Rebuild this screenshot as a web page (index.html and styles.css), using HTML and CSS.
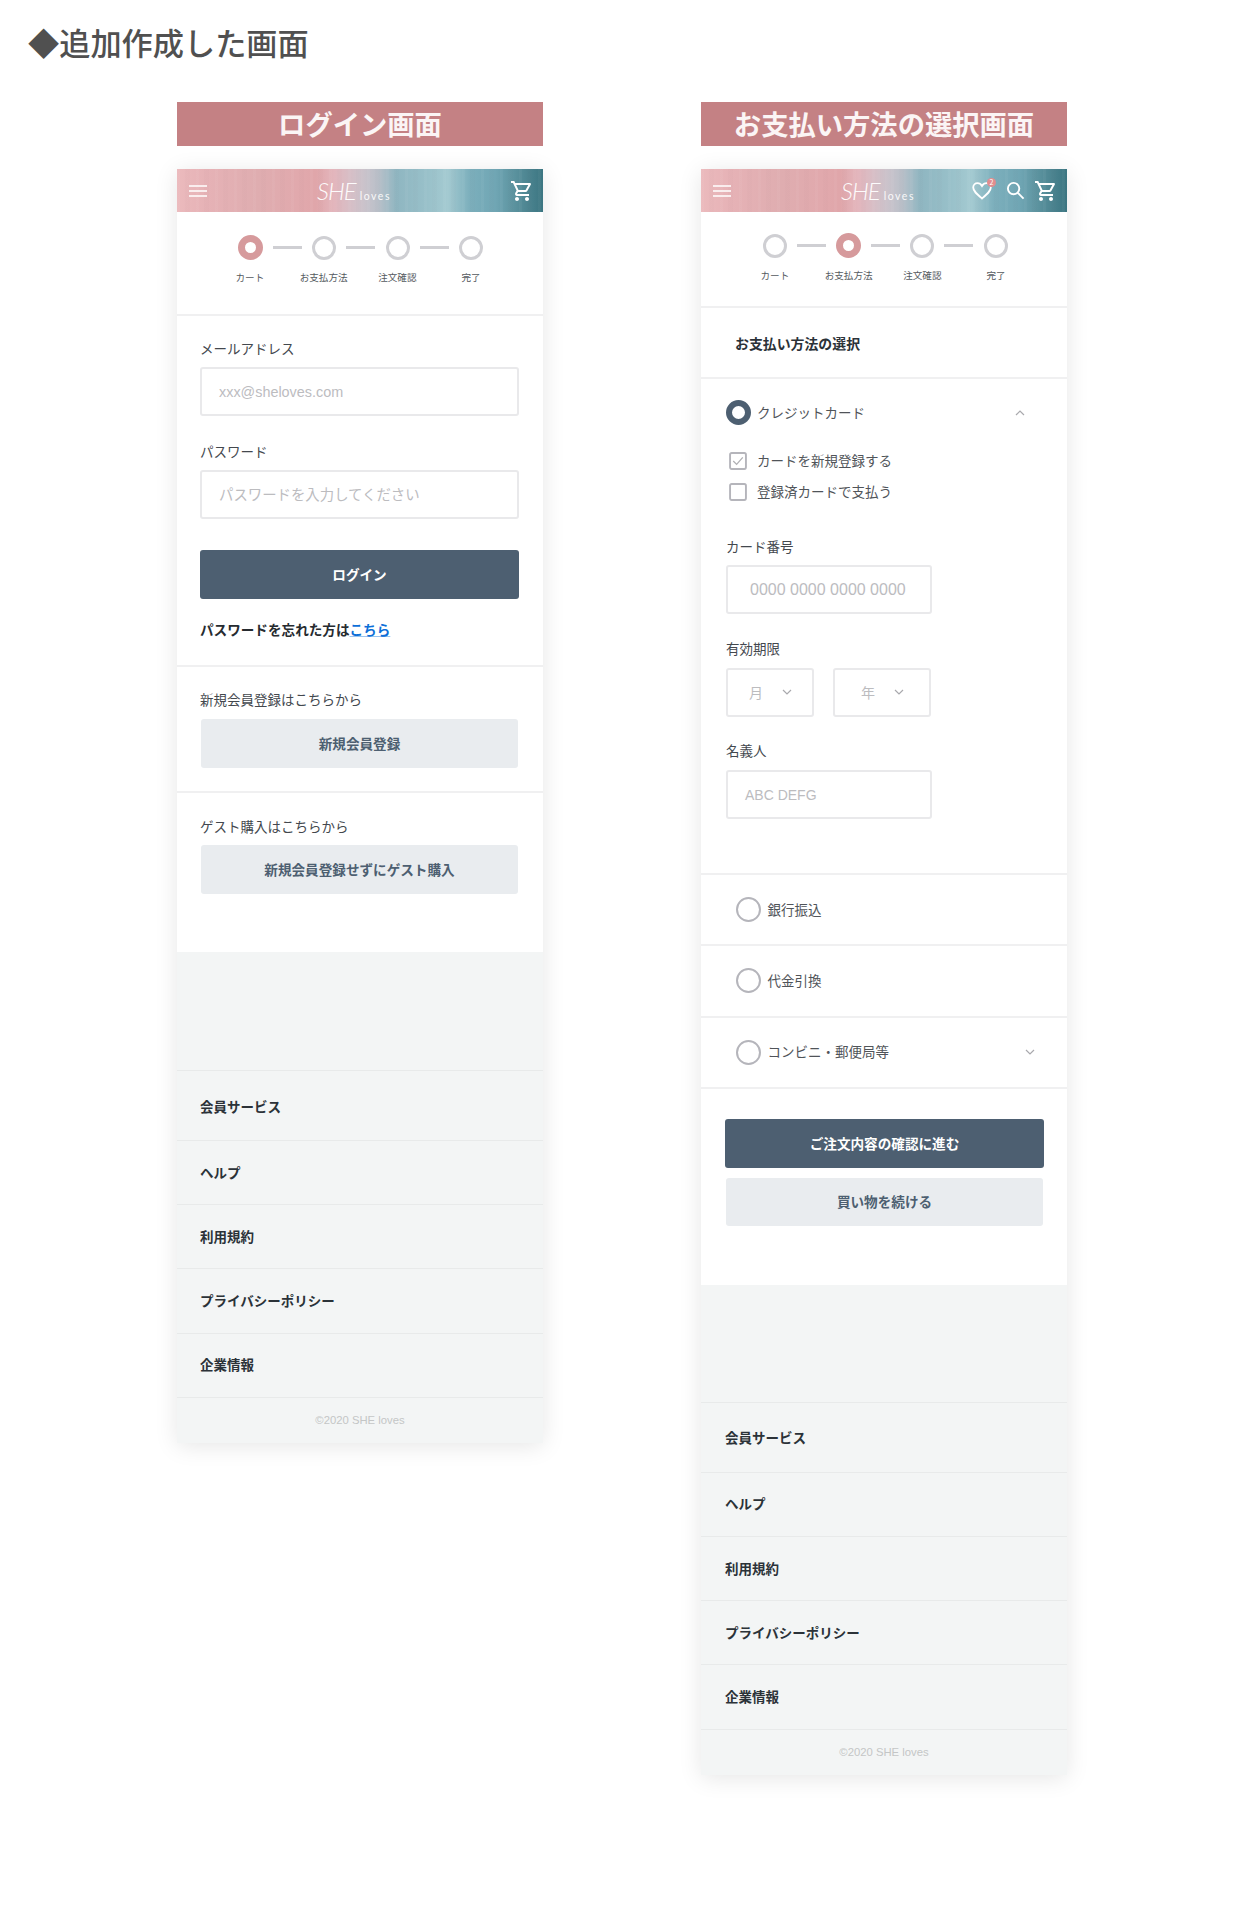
FILE: index.html
```html
<!DOCTYPE html>
<html lang="ja">
<head>
<meta charset="utf-8">
<title>追加作成した画面</title>
<link rel="stylesheet" href="styles.css">
</head>
<body>
<h1 class="page-title">◆追加作成した画面</h1>
<main class="screens">
  <section class="screen">
    <h2 class="screen-title">ログイン画面</h2>
    <div class="phone">
      <header class="app-bar">
        <svg class="icon-menu" viewBox="0 0 18 12"><path d="M0 1h18M0 6h18M0 11h18"/></svg>
        <div class="logo"><span class="logo-she">SHE</span><span class="logo-loves">loves</span></div>
        <div class="app-actions">
          <svg class="icon-cart" viewBox="0 0 24 24"><path d="M15.55 13c.75 0 1.41-.41 1.75-1.03l3.58-6.49c.37-.66-.11-1.48-.87-1.48H5.21l-.94-2H1v2h2l3.6 7.59-1.35 2.44C4.52 15.37 5.48 17 7 17h12v-2H7l1.1-2h7.45zM6.16 6h12.15l-2.76 5H8.53L6.16 6zM7 18c-1.1 0-1.99.9-1.99 2S5.9 22 7 22s2-.9 2-2-.9-2-2-2zm10 0c-1.1 0-1.99.9-1.99 2s.89 2 1.99 2 2-.9 2-2-.9-2-2-2z"/></svg>
        </div>
      </header>
      <div class="steps steps-login">
        <div class="step-track">
          <span class="dot dot-on"></span><span class="link"></span>
          <span class="dot"></span><span class="link"></span>
          <span class="dot"></span><span class="link"></span>
          <span class="dot"></span>
        </div>
        <div class="step-labels"><span>カート</span><span>お支払方法</span><span>注文確認</span><span>完了</span></div>
      </div>
      <div class="block block-login">
        <div class="label label-first">メールアドレス</div>
        <div class="field">xxx@sheloves.com</div>
        <div class="label label-next">パスワード</div>
        <div class="field">パスワードを入力してください</div>
        <div class="btn btn-dark btn-login">ログイン</div>
        <p class="forgot">パスワードを忘れた方は<a class="forgot-link" href="#">こちら</a></p>
      </div>
      <div class="block block-register">
        <div class="label label-register">新規会員登録はこちらから</div>
        <div class="btn btn-light">新規会員登録</div>
      </div>
      <div class="block block-guest">
        <div class="label label-first">ゲスト購入はこちらから</div>
        <div class="btn btn-light">新規会員登録せずにゲスト購入</div>
      </div>
      <footer class="site-foot">
        <a class="foot-row foot-row-first">会員サービス</a>
        <a class="foot-row">ヘルプ</a>
        <a class="foot-row">利用規約</a>
        <a class="foot-row">プライバシーポリシー</a>
        <a class="foot-row">企業情報</a>
        <div class="copyright">©2020 SHE loves</div>
      </footer>
    </div>
  </section>

  <section class="screen">
    <h2 class="screen-title">お支払い方法の選択画面</h2>
    <div class="phone">
      <header class="app-bar">
        <svg class="icon-menu" viewBox="0 0 18 12"><path d="M0 1h18M0 6h18M0 11h18"/></svg>
        <div class="logo"><span class="logo-she">SHE</span><span class="logo-loves">loves</span></div>
        <div class="app-actions">
          <span class="heart-wrap">
            <svg class="icon-heart" viewBox="0 0 20 18"><path d="M10 16.500C4.500 11.800 1.200 9 1.200 5.600 1.200 3 3.200 1.200 5.500 1.200c1.800 0 3.400 1 4.500 2.800 1.100-1.800 2.700-2.800 4.500-2.800 2.300 0 4.300 1.800 4.300 4.400 0 3.400-3.300 6.200-8.800 10.900z"/></svg>
            <span class="badge">2</span>
          </span>
          <svg class="icon-search" viewBox="0 0 20 20"><circle cx="8" cy="8" r="6"/><path d="M12.500 12.500L18.500 18.500"/></svg>
          <svg class="icon-cart" viewBox="0 0 24 24"><path d="M15.55 13c.75 0 1.41-.41 1.75-1.03l3.58-6.49c.37-.66-.11-1.48-.87-1.48H5.21l-.94-2H1v2h2l3.6 7.59-1.35 2.44C4.52 15.37 5.48 17 7 17h12v-2H7l1.1-2h7.45zM6.16 6h12.15l-2.76 5H8.53L6.16 6zM7 18c-1.1 0-1.99.9-1.99 2S5.9 22 7 22s2-.9 2-2-.9-2-2-2zm10 0c-1.1 0-1.99.9-1.99 2s.89 2 1.99 2 2-.9 2-2-.9-2-2-2z"/></svg>
        </div>
      </header>
      <div class="steps steps-pay">
        <div class="step-track">
          <span class="dot"></span><span class="link"></span>
          <span class="dot dot-on"></span><span class="link"></span>
          <span class="dot"></span><span class="link"></span>
          <span class="dot"></span>
        </div>
        <div class="step-labels"><span>カート</span><span>お支払方法</span><span>注文確認</span><span>完了</span></div>
      </div>
      <div class="pay-heading">お支払い方法の選択</div>
      <div class="block-card">
        <div class="option-head">
          <span class="radio radio-on"></span>
          <span class="option-name option-name-on">クレジットカード</span>
          <svg class="chev chev-up" viewBox="0 0 10 6"><path d="M1 5l4-4 4 4"/></svg>
        </div>
        <div class="check-row check-row-first">
          <svg class="checkbox" viewBox="0 0 17 17"><rect x="1" y="1" width="15" height="15" rx="1.500"/><path class="tick" d="M4 8.500l3.200 3.200L13 5"/></svg>
          <span>カードを新規登録する</span>
        </div>
        <div class="check-row">
          <svg class="checkbox" viewBox="0 0 17 17"><rect x="1" y="1" width="15" height="15" rx="1.500"/></svg>
          <span>登録済カードで支払う</span>
        </div>
        <div class="label label-card">カード番号</div>
        <div class="field field-card">0000 0000 0000 0000</div>
        <div class="label label-expiry">有効期限</div>
        <div class="selects">
          <div class="select select-month"><span>月</span><svg class="chev" viewBox="0 0 10 6"><path d="M1 1l4 4 4-4"/></svg></div>
          <div class="select select-year"><span>年</span><svg class="chev" viewBox="0 0 10 6"><path d="M1 1l4 4 4-4"/></svg></div>
        </div>
        <div class="label label-holder">名義人</div>
        <div class="field field-holder">ABC DEFG</div>
      </div>
      <div class="option-row"><span class="radio"></span><span class="option-name">銀行振込</span></div>
      <div class="option-row"><span class="radio"></span><span class="option-name">代金引換</span></div>
      <div class="option-row"><span class="radio"></span><span class="option-name">コンビニ・郵便局等</span><svg class="chev chev-end" viewBox="0 0 10 6"><path d="M1 1l4 4 4-4"/></svg></div>
      <div class="actions">
        <div class="btn btn-dark">ご注文内容の確認に進む</div>
        <div class="btn btn-light btn-continue">買い物を続ける</div>
      </div>
      <footer class="site-foot site-foot-pay">
        <a class="foot-row foot-row-first">会員サービス</a>
        <a class="foot-row">ヘルプ</a>
        <a class="foot-row">利用規約</a>
        <a class="foot-row">プライバシーポリシー</a>
        <a class="foot-row">企業情報</a>
        <div class="copyright">©2020 SHE loves</div>
      </footer>
    </div>
  </section>
</main>
</body>
</html>
```

FILE: styles.css
```css
* { box-sizing: border-box; }
html, body { margin: 0; padding: 0; }
body {
  height: 1911px;
  background: #fff;
  font-family: "Noto Sans CJK JP", "Liberation Sans", sans-serif;
  color: #43484e;
  overflow: hidden;
}
.page-title {
  margin: 0;
  padding: 21px 0 0 28px;
  height: 102px;
  font-size: 31.200px;
  line-height: 42px;
  font-weight: 500;
  color: #505050;
}
.screens {
  display: flex;
  gap: 158px;
  padding-left: 177px;
}
.screen { width: 366px; }
.screen-title {
  margin: 0 0 23px;
  height: 44px;
  background: #c48184;
  color: #fbf5f5;
  text-align: center;
  font-size: 27.300px;
  line-height: 42px;
  font-weight: 700;
}
.phone {
  background: #fff;
  box-shadow: 0 3px 22px rgba(0, 0, 0, .1);
}
.app-bar {
  height: 43px;
  display: grid;
  grid-template-columns: 1fr auto 1fr;
  align-items: center;
  padding: 0 9px 0 12px;
  background:
    repeating-linear-gradient(90deg, rgba(255,255,255,.035) 0 3px, rgba(255,255,255,0) 3px 8px, rgba(120,90,100,.02) 8px 13px, rgba(255,255,255,0) 13px 19px),
    linear-gradient(90deg, #ebbabd 0%, #e6b2b6 8%, #dfadb0 22%, #e1a9ad 33%, #e0a6aa 38%, #e3b6bd 43%, #cfc3cb 50%, #b9c0c9 55%, #8fb6c1 60%, #98c0c9 68%, #a4cad1 74%, #7cafbc 80%, #70a6b4 87%, #5c939f 92%, #3b7581 100%);
}
.icon-menu { width: 18px; height: 12px; fill: none; stroke: #fff; stroke-width: 1.700; }
.logo {
  display: flex;
  align-items: baseline;
  gap: 4px;
  margin-right: 15px;
  color: #fff;
}
.logo-she {
  font-family: "Lato", sans-serif;
  font-style: italic;
  font-weight: 300;
  font-size: 24px;
  line-height: 28px;
  letter-spacing: -1px;
  opacity: .95;
}
.logo-loves {
  font-family: "Lato", sans-serif;
  font-size: 10.500px;
  letter-spacing: 1.500px;
  opacity: .9;
}
.app-actions {
  display: flex;
  align-items: center;
  justify-content: flex-end;
  gap: 9px;
}
.icon-cart { width: 24px; height: 24px; fill: #fff; }
.icon-search { width: 19px; height: 19px; fill: none; stroke: #fff; stroke-width: 2; }
.heart-wrap { position: relative; display: block; width: 20px; height: 18px; margin-right: 5px; }
.icon-heart { display: block; width: 20px; height: 18px; fill: none; stroke: #fff; stroke-width: 1.800; }
.badge {
  position: absolute;
  top: -4px;
  right: -4px;
  width: 9px;
  height: 9px;
  border-radius: 50%;
  background: #e08d8f;
  color: #fff;
  font-size: 7px;
  line-height: 9px;
  text-align: center;
}
.steps { border-bottom: 2px solid #f0f0f1; }
.steps-login { height: 104px; padding-top: 23px; }
.steps-pay { height: 96px; padding-top: 21px; }
.step-track { display: flex; align-items: center; justify-content: center; height: 25px; }
.steps-login .step-track { padding-left: 1.400px; }
.steps-pay .step-track { padding-left: 2.600px; }
.dot { width: 24px; height: 24px; border-radius: 50%; border: 3px solid #cfcfd3; background: #fff; flex: none; }
.dot-on { width: 25px; height: 25px; margin: 0 -.5px; border: 7.500px solid #d69a9c; }
.link { width: 29px; height: 2.500px; margin: 0 10.350px; background: #cfcfd3; flex: none; }
.step-labels {
  display: grid;
  grid-template-columns: repeat(4, 1fr);
  margin-top: 10px;
  padding: 0 35px 0 36px;
  font-size: 9.600px;
  line-height: 14px;
  text-align: center;
  color: #555a60;
}
.steps-pay .step-labels { padding: 0 34px 0 37px; }
.block { padding: 0 24px 0 23px; border-bottom: 2px solid #f0f0f1; }
.block-login { height: 351px; padding-top: 22px; }
.block-register { height: 126px; padding-top: 22px; }
.block-guest { height: 159px; padding-top: 23px; border-bottom: 0; }
.label { font-size: 13.500px; line-height: 20px; color: #43484e; }
.label-first { margin-bottom: 9px; }
.label-register { margin-bottom: 10px; }
.label-next { margin: 25px 0 9px; }
.field {
  height: 49px;
  border: 2px solid #e9e9eb;
  border-radius: 3px;
  padding-left: 17px;
  font-family: "Liberation Sans", "Noto Sans CJK JP", sans-serif;
  font-size: 14.400px;
  line-height: 45px;
  color: #bcbcbf;
}
.block-login .field { line-height: 47px; }
.btn {
  height: 49px;
  border-radius: 3px;
  text-align: center;
  font-size: 13.600px;
  line-height: 48px;
  font-weight: 700;
}
.btn-dark { background: #4d5f71; color: #fff; }
.btn-light { background: #e9ecef; color: #4d5f71; margin: 0 1px; }
.btn-login { margin-top: 31px; }
.forgot {
  margin: 20px 0 0;
  font-size: 13.600px;
  line-height: 20px;
  font-weight: 700;
  color: #262b30;
}
.forgot-link { color: #0d6fd8; text-decoration: underline; text-decoration-color: #9cc4ee; }
.site-foot { background: #f3f5f5; margin-top: 0; padding-top: 118px; }
.site-foot-pay { padding-top: 117px; }
.foot-row {
  display: flex;
  align-items: center;
  height: 64.200px;
  padding: 0 0 2px 23px;
  border-top: 1px solid #e8eaea;
  font-size: 13.500px;
  font-weight: 700;
  color: #2b3238;
}
.site-foot-pay .foot-row { padding-left: 24px; }
.foot-row-first { height: 70px; padding-top: 2px; }
.copyright {
  height: 46.700px;
  border-top: 1px solid #e8eaea;
  text-align: center;
  font-family: "Liberation Sans", sans-serif;
  font-size: 11.300px;
  line-height: 44px;
  color: #c4c6c6;
}
.pay-heading {
  height: 71px;
  display: flex;
  align-items: center;
  padding-left: 34px;
  border-bottom: 2px solid #f0f0f1;
  font-size: 13.900px;
  font-weight: 700;
  color: #2b3238;
}
.block-card {
  height: 496px;
  padding: 21px 24px 0 25px;
  border-bottom: 2px solid #f0f0f1;
}
.option-head { display: flex; align-items: center; height: 25px; }
.radio { width: 25px; height: 25px; border-radius: 50%; border: 2px solid #b5b5bb; background: #fff; flex: none; }
.radio-on { border: 6.500px solid #4d5f71; }
.option-name { margin-left: 7px; padding-bottom: 2px; font-size: 13.500px; line-height: 20px; color: #505459; }
.option-name-on { margin-left: 6px; }
.chev { width: 10px; height: 6px; fill: none; stroke: #a9a9ad; stroke-width: 1.200; flex: none; }
.chev-up { margin-left: auto; margin-right: 18px; }
.chev-end { margin-left: auto; margin-right: 32px; }
.check-row {
  display: flex;
  align-items: center;
  gap: 10px;
  height: 18px;
  margin: 13px 0 0 3px;
  font-size: 13.500px;
  color: #505459;
}
.check-row-first { margin-top: 26.500px; }
.check-row span { padding-bottom: 2px; }
.checkbox { width: 18px; height: 18px; fill: #fff; stroke: #b5b5bb; stroke-width: 1.800; flex: none; }
.tick { fill: none; stroke: #b0b0b4; stroke-width: 1.200; }
.label-card { margin: 35px 0 9px; }
.field-card { width: 206px; padding-left: 22px; font-size: 16px; }
.label-expiry { margin: 24.500px 0 9.500px; }
.selects { display: flex; gap: 19px; }
.select {
  display: flex;
  align-items: center;
  height: 49px;
  border: 2px solid #e9e9eb;
  border-radius: 3px;
  font-size: 14px;
  color: #bcbcbf;
}
.select-month { width: 88px; padding-left: 21px; gap: 19px; }
.select-year { width: 98px; padding-left: 26px; gap: 19px; }
.select span { padding-bottom: 1px; }
.label-holder { margin: 23.500px 0 9.500px; }
.field-holder { width: 206px; font-size: 14px; line-height: 47px; }
.option-row {
  display: flex;
  align-items: center;
  height: 71.300px;
  padding-left: 34.500px;
  border-bottom: 2px solid #f0f0f1;
}
.actions { padding: 30px 23px 59px 24px; }
.btn-continue { margin-top: 10px; height: 48px; line-height: 46px; }
```
